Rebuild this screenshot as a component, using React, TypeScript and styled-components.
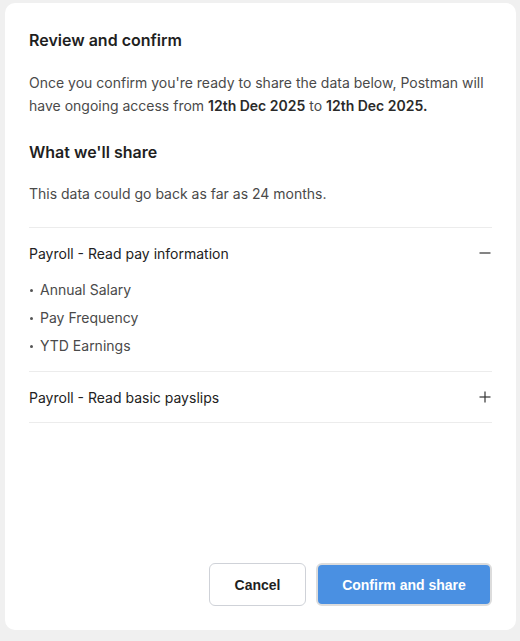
import React, { FC, useState } from "react";
import styled, { createGlobalStyle } from "styled-components";

const GlobalStyle = createGlobalStyle`
  html, body {
    margin: 0;
    padding: 0;
    background: #f0f0f0;
  }
  body {
    font-family: Inter, "Noto Sans", sans-serif;
    -webkit-font-smoothing: antialiased;
  }
  * { box-sizing: border-box; }
`;

const Page = styled.div`
  height: 641px;
  padding: 3px 4px 11px 5px;
  display: flex;
`;

const Card = styled.div`
  flex: 1;
  background: #ffffff;
  border-radius: 10px;
  padding: 24px;
  display: flex;
  flex-direction: column;
`;

const Heading = styled.h2<{ $mt?: number }>`
  margin: ${({ $mt }) => $mt ?? 0}px 0 0;
  font-size: 16px;
  line-height: 26px;
  font-weight: 600;
  color: #1f1f1f;
`;

const Text = styled.p<{ $mt: number }>`
  margin: ${({ $mt }) => $mt}px 0 0;
  font-size: 14px;
  line-height: 23px;
  color: #4a4a4a;

  & b {
    font-weight: 600;
    color: #2a2a2a;
  }
`;

const Sections = styled.div`
  margin-top: 22px;
  border-top: 1px solid #ececec;
`;

const Section = styled.div`
  border-bottom: 1px solid #ececec;
`;

const SectionHeader = styled.button`
  all: unset;
  width: 100%;
  height: 50px;
  display: flex;
  align-items: center;
  justify-content: space-between;
  cursor: pointer;
  font-family: Inter, "Noto Sans", sans-serif;
  font-size: 14px;
  color: #222222;
`;

const ToggleIcon = styled.svg`
  width: 12px;
  height: 12px;
  margin-right: 1px;
  stroke: #333333;
  stroke-width: 1.2;
`;

const Items = styled.ul`
  list-style: none;
  margin: -2px 0 0;
  padding: 0 0 11px;
`;

const Item = styled.li`
  position: relative;
  padding-left: 11px;
  font-size: 14px;
  line-height: 28px;
  color: #4a4a4a;

  &::before {
    content: "";
    position: absolute;
    left: 1px;
    top: 13px;
    width: 3px;
    height: 3px;
    border-radius: 50%;
    background: #555555;
  }
`;

const Footer = styled.div`
  margin-top: auto;
  display: flex;
  justify-content: flex-end;
  gap: 10px;
`;

const Button = styled.button<{ $primary?: boolean }>`
  height: 43px;
  padding: 0 24px;
  border-radius: 6px;
  font-family: "Liberation Sans", Arial, sans-serif;
  font-size: 14px;
  font-weight: 700;
  cursor: pointer;
  color: ${({ $primary }) => ($primary ? "#ffffff" : "#1f1f1f")};
  background: ${({ $primary }) => ($primary ? "#4a90e2" : "#ffffff")};
  border: ${({ $primary }) =>
    $primary ? "2px solid #dcdcdc" : "1px solid #cfd2d8"};
  width: ${({ $primary }) => ($primary ? 176 : 97)}px;
`;

type Scope = { title: string; items: string[] };

const scopes: Scope[] = [
  {
    title: "Payroll - Read pay information",
    items: ["Annual Salary", "Pay Frequency", "YTD Earnings"],
  },
  { title: "Payroll - Read basic payslips", items: ["Payslip Date", "Net Pay"] },
];

const Toggle: FC<{ open: boolean }> = ({ open }) => (
  <ToggleIcon viewBox="0 0 12 12" fill="none">
    <line x1="0.5" y1="6" x2="11.5" y2="6" />
    {!open && <line x1="6" y1="0.5" x2="6" y2="11.5" />}
  </ToggleIcon>
);

const App: FC = () => {
  const [open, setOpen] = useState<number | null>(0);

  return (
    <>
      <GlobalStyle />
      <Page>
        <Card>
          <Heading>Review and confirm</Heading>
          <Text $mt={18}>
            Once you confirm you're ready to share the data below, Postman will
            have ongoing access from <b>12th Dec 2025</b> to{" "}
            <b>12th Dec 2025.</b>
          </Text>
          <Heading $mt={22}>What we'll share</Heading>
          <Text $mt={17}>This data could go back as far as 24 months.</Text>
          <Sections>
            {scopes.map((s, i) => (
              <Section key={s.title}>
                <SectionHeader onClick={() => setOpen(open === i ? null : i)}>
                  {s.title}
                  <Toggle open={open === i} />
                </SectionHeader>
                {open === i && (
                  <Items>
                    {s.items.map((it) => (
                      <Item key={it}>{it}</Item>
                    ))}
                  </Items>
                )}
              </Section>
            ))}
          </Sections>
          <Footer>
            <Button>Cancel</Button>
            <Button $primary>Confirm and share</Button>
          </Footer>
        </Card>
      </Page>
    </>
  );
};

export default App;
